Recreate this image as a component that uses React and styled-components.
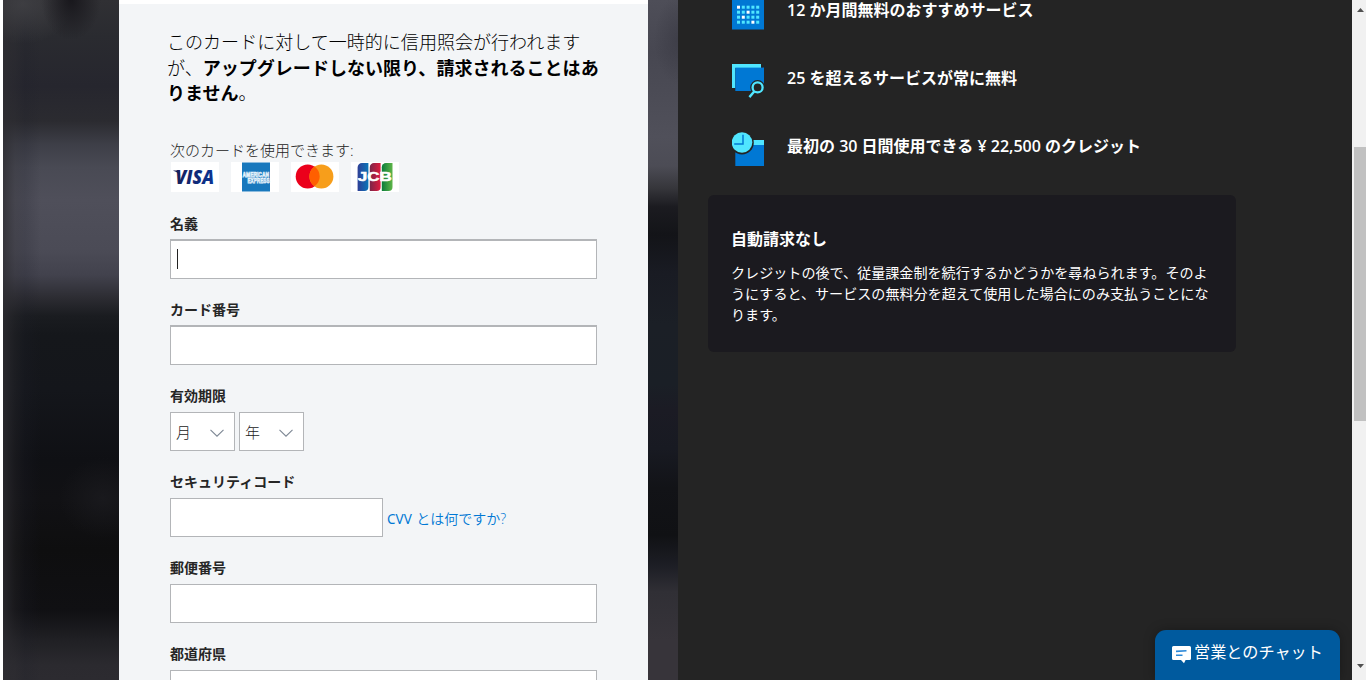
import React from "react";
import styled, { createGlobalStyle } from "styled-components";

const GlobalStyle = createGlobalStyle`
  * { box-sizing: border-box; }
  body {
    margin: 0;
    overflow: hidden;
    background: #fff;
    font-family: "Open Sans", "Noto Sans CJK JP", sans-serif;
  }
`;

const Page = styled.div`
  display: flex;
  width: 1366px;
  height: 680px;
  padding-left: 3px;
  overflow: hidden;
`;

const LeftBackdrop = styled.div`
  width: 116px;
  background:
    radial-gradient(ellipse 30px 40px at 68px 0, rgba(22, 21, 26, 0.9), transparent),
    radial-gradient(ellipse 50px 40px at 20px 4px, rgba(66, 66, 70, 0.8), transparent),
    radial-gradient(ellipse 44px 40px at 100px 498px, rgba(27, 27, 31, 0.8), transparent),
    linear-gradient(90deg, rgba(46, 45, 50, 0.75) 0, rgba(46, 45, 50, 0.3) 12px, rgba(30, 31, 42, 0.2) 22px, rgba(44, 43, 48, 0) 38px),
    linear-gradient(180deg, #303034 0, #2a2b30 36px, #26262e 86px, #2b2b30 121px, #3e3f48 145px,
      #494a54 168px, #4f4f5a 200px, #4b4b56 250px, #42424d 275px, #2c2c32 298px, #1a1c20 316px, #15171b 335px, #14161b 390px,
      #0f1014 460px, #111114 500px, #0e0e0f 550px, #101013 610px, #202024 640px, #2b2a2f 665px, #2c2b30 680px);
`;

const RightBackdrop = styled.div`
  width: 30px;
  background:
    radial-gradient(ellipse 24px 44px at 30px 40px, rgba(60, 60, 70, 0.8), transparent),
    linear-gradient(180deg, #4e4e58 0, #474751 52px, #50505a 137px, #4c4c55 166px, #36363b 188px,
      #1b1b20 207px, #131418 235px, #191b23 273px, #1b1f26 325px, #1a1f26 384px, #1b1b24 410px,
      #181a22 449px, #121317 488px, #101114 535px, #1d1e25 566px, #302f35 592px, #37343a 640px, #37343a 680px);
`;

const FormPanel = styled.main`
  width: 529px;
  border-top: 4px solid #fff;
  padding: 26px 51px 0;
  background: #f3f5f7;
  color: #262626;
  overflow: hidden;
`;

const Notice = styled.p`
  margin: 0 -20px 0 -3px;
  height: 108px;
  font-size: 18.04px;
  line-height: 25.6px;
  font-weight: 300;
  color: #000;
  white-space: nowrap;

  strong { font-weight: 700; }
`;

const Accepted = styled.div`
  height: 24px;
  font-size: 15px;
  line-height: 24px;
  font-weight: 300;
  color: #222;
`;

const CardRow = styled.div`
  display: flex;
  gap: 12px;
  padding-left: 1px;
  margin-bottom: 20px;

  svg { display: block; background: #fff; }
`;

const Field = styled.div`
  height: ${(p) => p.$height || 86}px;
`;

const Label = styled.label`
  display: block;
  height: 27px;
  font-size: 14px;
  line-height: ${(p) => (p.$tight ? 21 : 23)}px;
  font-weight: 600;
  color: #262626;
`;

const Line = styled.div`
  display: flex;
  align-items: center;
  gap: 4px;
`;

const Box = styled.div`
  display: flex;
  align-items: center;
  width: ${(p) => p.$width || 427}px;
  height: ${(p) => (p.$deep ? 40 : 39)}px;
  border: 1px solid #b3b5b8;
  border-top-width: ${(p) => (p.$deep ? 2 : 1)}px;
  padding-left: 6px;
  background: #fff;
`;

const Caret = styled.span`
  width: 1px;
  height: 20px;
  margin-bottom: 1px;
  background: #222;
`;

const Select = styled(Box)`
  justify-content: space-between;
  padding: 0 10px 0 5px;
  font-size: 15px;
  line-height: 20px;
  font-weight: 300;
  color: #222;
`;

const HelpLink = styled.a`
  padding-top: 2px;
  font-size: 14px;
  line-height: 20px;
  color: #0078d4;
  white-space: nowrap;
  font-weight: 350;
`;

const Latin = styled.span`
  display: inline-block;
  font-family: "Noto Sans", sans-serif;
  font-size: 13.5px;
  font-weight: 400;
  letter-spacing: 0;
  margin-right: 1px;
`;

const Panel = styled.aside`
  position: relative;
  width: 674px;
  background: #242424;
  color: #fff;
  overflow: hidden;
`;

const Features = styled.ul`
  list-style: none;
  margin: -24px 0 15px;
  padding: 0 0 0 54px;
`;

const Feature = styled.li`
  display: flex;
  align-items: center;
  gap: 23px;
  height: 68px;
  font-size: 16px;
  font-weight: 600;
  white-space: nowrap;

  svg { display: block; margin-top: 6px; }
`;

const FeatureText = styled.span`
  padding-bottom: 2px;
`;

const InfoCard = styled.section`
  width: 528px;
  height: 157px;
  margin-left: 30px;
  padding: 32px 23px 0;
  border-radius: 6px;
  background: #1b1a1f;

  h3 {
    margin: 0 0 10px;
    font-size: 16px;
    line-height: 25px;
    font-weight: 700;
  }

  p {
    margin: 0;
    font-size: 14.08px;
    line-height: 21.2px;
    white-space: nowrap;
  }
`;

const Chat = styled.button`
  position: absolute;
  right: 12px;
  bottom: 0;
  display: flex;
  align-items: flex-start;
  gap: 3px;
  width: 185px;
  height: 50px;
  padding: 10px 0 0 17px;
  border: 0;
  border-radius: 11px 11px 0 0;
  background: #005a9e;
  box-shadow: 0 0 12px rgba(0, 0, 0, 0.3);
  color: #fff;
  font-family: inherit;
  font-size: 16.15px;
  line-height: 25px;
  white-space: nowrap;

  svg { display: block; margin-top: 6px; flex: none; }
`;

const Scrollbar = styled.div`
  display: flex;
  flex-direction: column;
  justify-content: space-between;
  align-items: flex-end;
  width: 14px;
  padding: 8px 0 12px;
  background: #f1f1f1;

  svg { display: block; margin-right: 2px; }
`;

const Thumb = styled.div`
  width: 12px;
  height: 274px;
  margin-bottom: 108px;
  background: #c1c1c1;
`;

const Chevron = () => (
  <svg width="14" height="8" viewBox="0 0 14 8" style={{ marginTop: 3 }}>
    <path d="M.5 .9 7 7.2 13.5 .9" fill="none" stroke="#7d8794" strokeWidth="1.1" />
  </svg>
);

const Visa = () => (
  <svg width="48" height="30" viewBox="0 0 48 30">
    <defs>
      <linearGradient id="visa" x1="0" x2="1">
        <stop offset="0" stopColor="#17205a" />
        <stop offset="1" stopColor="#0a3494" />
      </linearGradient>
    </defs>
    <text x="4.5" y="22.3" fontFamily="Open Sans, sans-serif" fontSize="19.5" fontWeight="800" fontStyle="italic"
      textLength="38.5" lengthAdjust="spacingAndGlyphs" fill="url(#visa)">VISA</text>
    <path d="M2.3 8.4h5.5l1.4 5C7.4 11 4.9 9.3 2.3 8.7Z" fill="#17205a" />
  </svg>
);

const Amex = () => (
  <svg width="48" height="30" viewBox="0 0 48 30">
    <rect x="11" y=".5" width="28" height="29" fill="#1878bd" />
    <g fontFamily="Liberation Sans, sans-serif" fontWeight="700" fill="#1878bd" stroke="#e4f1fa" strokeWidth=".75" fontSize="6.4">
      <text x="11.5" y="15.4" textLength="26.5" lengthAdjust="spacingAndGlyphs">AMERICAN</text>
      <text x="16.5" y="21.2" textLength="22" lengthAdjust="spacingAndGlyphs">EXPRESS</text>
    </g>
  </svg>
);

const Mastercard = () => (
  <svg width="48" height="30" viewBox="0 0 48 30">
    <circle cx="16.7" cy="14.4" r="12" fill="#eb001b" />
    <circle cx="30.4" cy="14.4" r="12" fill="#f79e1b" />
    <path d="M23.55 4.55a12 12 0 0 1 0 19.7 12 12 0 0 1 0-19.7Z" fill="#ff5f00" />
  </svg>
);

const Jcb = () => (
  <svg width="48" height="30" viewBox="0 0 48 30">
    <defs>
      <linearGradient id="jb" x1="0" x2="1"><stop offset="0" stopColor="#2f3f96" /><stop offset="1" stopColor="#0a75b8" /></linearGradient>
      <linearGradient id="jr" x1="0" x2="1"><stop offset="0" stopColor="#7a2548" /><stop offset="1" stopColor="#e01a3d" /></linearGradient>
      <linearGradient id="jg" x1="0" x2="1"><stop offset="0" stopColor="#0a7c3c" /><stop offset="1" stopColor="#5fb548" /></linearGradient>
    </defs>
    <path d="M11 1h6.4v24a4 4 0 0 1-4 4H6.6V5.4A4.4 4.4 0 0 1 11 1Z" fill="url(#jb)" />
    <path d="M23 1h6.6v24a4 4 0 0 1-4 4h-6.8V5.2A4.2 4.2 0 0 1 23 1Z" fill="url(#jr)" />
    <path d="M35 1h6.5v24a4 4 0 0 1-4 4h-6.7V5.2A4.2 4.2 0 0 1 35 1Z" fill="url(#jg)" />
    <text x="6.8" y="18.9" fontFamily="Liberation Sans, sans-serif" fontSize="12.2" fontWeight="700"
      textLength="34" lengthAdjust="spacingAndGlyphs" fill="#fff" stroke="#fff" strokeWidth=".5">JCB</text>
  </svg>
);

const whiteDots = ["0-0", "2-1", "1-2", "3-3"];

const CalendarIcon = () => (
  <svg width="32" height="34" viewBox="0 0 32 34">
    <rect width="32" height="33.5" fill="#0078d4" />
    {[0, 1, 2, 3].map((r) =>
      [0, 1, 2, 3, 4].map((c) => (
        <rect key={`${c}-${r}`} x={5 + c * 4.8} y={9.7 + r * 5} width="3" height="3"
          fill={whiteDots.includes(`${c}-${r}`) ? "#fff" : "#50e6ff"} />
      ))
    )}
  </svg>
);

const ServicesIcon = () => (
  <svg width="32" height="34" viewBox="0 0 32 34">
    <path d="M0 0h29v4H3.3v20H0Z" fill="#50e6ff" />
    <path d="M3.3 3.6H32V27H3.3Z" fill="#0078d4" />
    <circle cx="25.6" cy="23.4" r="7.4" fill="#242424" />
    <path d="m22.2 27.5-4.6 5.5" stroke="#242424" strokeWidth="5" />
    <circle cx="25.6" cy="23.4" r="5" fill="#242424" stroke="#50e6ff" strokeWidth="2.3" />
    <path d="m22.2 27.5-4.8 5.6" stroke="#50e6ff" strokeWidth="2.4" />
  </svg>
);

const ClockIcon = () => (
  <svg width="32" height="34" viewBox="0 0 32 34">
    <path d="M3.3 13H32v21H3.3Z" fill="#0078d4" />
    <path d="M3.3 8H32v5H3.3Z" fill="#50e6ff" />
    <path d="M0 7h21v6H0Z" fill="#242424" />
    <circle cx="10" cy="10.7" r="11.8" fill="#242424" />
    <circle cx="10" cy="10.5" r="10.3" fill="#50e6ff" />
    <path d="M11 2.8V12H2.2" fill="none" stroke="#0078d4" strokeWidth="1.5" />
  </svg>
);

const ChatIcon = () => (
  <svg width="19" height="18" viewBox="0 0 19 18">
    <path d="M1.5 0h16A1.5 1.5 0 0 1 19 1.5v11a1.5 1.5 0 0 1-1.5 1.5H13.6L12 17.2 9 14H1.5A1.5 1.5 0 0 1 0 12.5v-11A1.5 1.5 0 0 1 1.5 0Z" fill="#fff" />
    <path d="M4 5.4 14.5 4.8M4 9.2h6.5" stroke="#2b88d8" strokeWidth="1.6" />
  </svg>
);

export default function App() {
  return (
    <>
      <GlobalStyle />
      <Page>
        <LeftBackdrop />
        <FormPanel>
          <Notice>
            このカードに対して一時的に信用照会が行われます<br />
            が、<strong>アップグレードしない限り、請求されることはあ<br />
            りません</strong>。
          </Notice>
          <Accepted>次のカードを使用できます:</Accepted>
          <CardRow>
            <Visa />
            <Amex />
            <Mastercard />
            <Jcb />
          </CardRow>
          <Field>
            <Label>名義</Label>
            <Box $deep><Caret /></Box>
          </Field>
          <Field $height={87}>
            <Label>カード番号</Label>
            <Box $deep />
          </Field>
          <Field>
            <Label $tight>有効期限</Label>
            <Line>
              <Select $width={65}>月<Chevron /></Select>
              <Select $width={65}>年<Chevron /></Select>
            </Line>
          </Field>
          <Field>
            <Label $tight>セキュリティコード</Label>
            <Line>
              <Box $width={213} />
              <HelpLink><Latin>CVV</Latin> とは何ですか?</HelpLink>
            </Line>
          </Field>
          <Field>
            <Label $tight>郵便番号</Label>
            <Box />
          </Field>
          <Field>
            <Label $tight>都道府県</Label>
            <Box />
          </Field>
        </FormPanel>
        <RightBackdrop />
        <Panel>
          <Features>
            <Feature><CalendarIcon /><FeatureText>12 か月間無料のおすすめサービス</FeatureText></Feature>
            <Feature><ServicesIcon /><FeatureText>25 を超えるサービスが常に無料</FeatureText></Feature>
            <Feature><ClockIcon /><FeatureText>最初の 30 日間使用できる ¥ 22,500 のクレジット</FeatureText></Feature>
          </Features>
          <InfoCard>
            <h3>自動請求なし</h3>
            <p>
              クレジットの後で、従量課金制を続行するかどうかを尋ねられます。そのよ<br />
              うにすると、サービスの無料分を超えて使用した場合にのみ支払うことにな<br />
              ります。
            </p>
          </InfoCard>
          <Chat><ChatIcon />営業とのチャット</Chat>
        </Panel>
        <Scrollbar>
          <svg width="7" height="4" viewBox="0 0 7 4"><path d="M0 4 3.5 0 7 4Z" fill="#505050" /></svg>
          <Thumb />
          <svg width="7" height="4" viewBox="0 0 7 4"><path d="M0 0 3.5 4 7 0Z" fill="#505050" /></svg>
        </Scrollbar>
      </Page>
    </>
  );
}
